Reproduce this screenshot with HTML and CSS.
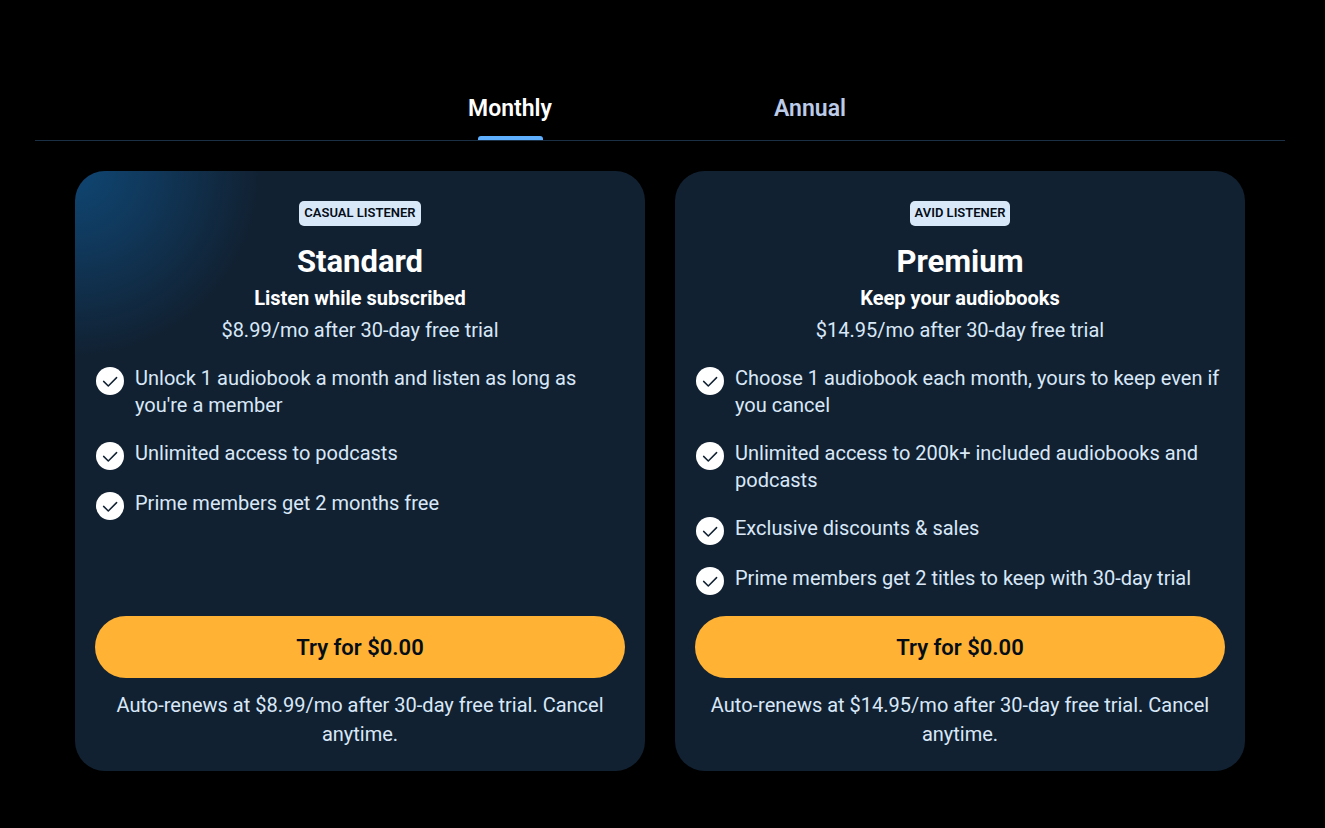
FILE: index.html
```html
<!DOCTYPE html>
<html lang="en">
<head>
    <meta charset="utf-8">
    <meta name="viewport" content="width=device-width, initial-scale=1">
    <title>Membership plans</title>
    <link rel="stylesheet" href="styles.css">
</head>
<body>
    <svg class="sprite" aria-hidden="true">
        <symbol id="check" viewBox="0 0 28 28">
            <circle cx="14" cy="14" r="14" fill="#fff"/>
            <path d="M7.6 14.4l4.7 4.6 8.3-8.4" fill="none" stroke="#112132" stroke-width="1.5" stroke-linecap="round" stroke-linejoin="round"/>
        </symbol>
    </svg>
    <main class="plans">
        <div class="tabs" role="tablist">
            <button class="tab active" role="tab" aria-selected="true">Monthly</button>
            <button class="tab" role="tab" aria-selected="false">Annual</button>
        </div>
        <div class="cards">
            <section class="card glow">
                <span class="badge">CASUAL LISTENER</span>
                <h2 class="name">Standard</h2>
                <p class="tagline">Listen while subscribed</p>
                <p class="price">$8.99/mo after 30-day free trial</p>
                <ul class="benefits">
                    <li><svg class="check"><use href="#check"/></svg>Unlock 1 audiobook a month and listen as long as you're a member</li>
                    <li><svg class="check"><use href="#check"/></svg>Unlimited access to podcasts</li>
                    <li><svg class="check"><use href="#check"/></svg>Prime members get 2 months free</li>
                </ul>
                <button class="try">Try for $0.00</button>
                <p class="terms">Auto-renews at $8.99/mo after 30-day free trial. Cancel anytime.</p>
            </section>
            <section class="card">
                <span class="badge">AVID LISTENER</span>
                <h2 class="name">Premium</h2>
                <p class="tagline">Keep your audiobooks</p>
                <p class="price">$14.95/mo after 30-day free trial</p>
                <ul class="benefits">
                    <li><svg class="check"><use href="#check"/></svg>Choose 1 audiobook each month, yours to keep even if you cancel</li>
                    <li><svg class="check"><use href="#check"/></svg>Unlimited access to 200k+ included audiobooks and podcasts</li>
                    <li><svg class="check"><use href="#check"/></svg>Exclusive discounts &amp; sales</li>
                    <li><svg class="check"><use href="#check"/></svg>Prime members get 2 titles to keep with 30-day trial</li>
                </ul>
                <button class="try">Try for $0.00</button>
                <p class="terms">Auto-renews at $14.95/mo after 30-day free trial. Cancel anytime.</p>
            </section>
        </div>
    </main>
</body>
</html>
```
FILE: styles.css
```css
* {
    box-sizing: border-box;
}
body {
    margin: 0;
    background: #000;
    color: #d9e8f8;
    font-family: Roboto, "Liberation Sans", sans-serif;
    font-size: 20px;
}
h2, p, ul {
    margin: 0;
    padding: 0;
}
button {
    border: none;
    font-family: inherit;
    font-weight: 600;
    cursor: pointer;
}
.sprite {
    display: block;
    width: 0;
    height: 0;
}
.plans {
    padding: 76px 40px 57px 35px;
}
.tabs {
    display: flex;
    justify-content: center;
    border-bottom: 1px solid #1b2f45;
}
.tab {
    display: flex;
    flex-direction: column;
    justify-content: space-between;
    align-items: center;
    width: 300px;
    height: 64px;
    padding: 17px 0 0;
    background: none;
    color: #bccbe8;
    font-size: 23px;
    line-height: 32px;
}
.tab.active {
    color: #fff;
}
.tab.active::after {
    content: "";
    width: 65px;
    height: 4px;
    border-radius: 3px 3px 0 0;
    background: #5eb0ff;
}
.cards {
    display: grid;
    grid-template-columns: 1fr 1fr;
    gap: 30px;
    padding: 30px 40px 0;
}
.card {
    display: flex;
    flex-direction: column;
    align-items: center;
    padding: 30px 20px 22px;
    border-radius: 30px;
    background: #112132;
    text-align: center;
}
.card.glow {
    background: radial-gradient(circle at 0 0, #0f426c 20px, #10385b 75px, #112132 185px);
}
.badge {
    height: 25px;
    padding: 0 5px;
    border-radius: 5px;
    background: #d9e8f8;
    color: #040d18;
    font-size: 13px;
    font-weight: 600;
    line-height: 23px;
}
.name {
    margin-top: 16px;
    color: #fff;
    font-size: 31px;
    font-weight: 700;
    line-height: 40px;
}
.tagline {
    color: #fff;
    font-weight: 700;
    line-height: 32px;
}
.price {
    line-height: 32px;
}
.benefits {
    display: flex;
    flex-direction: column;
    align-self: stretch;
    gap: 21px;
    margin: 19px 0 22px;
    list-style: none;
    line-height: 27px;
    text-align: left;
}
.benefits li {
    display: flex;
    gap: 11px;
    padding-left: 1px;
}
.check {
    flex: none;
    width: 28px;
    height: 28px;
    margin: 2px 0 -1px;
}
.try {
    align-self: stretch;
    height: 62px;
    margin-top: auto;
    border-radius: 31px;
    background: #ffb234;
    color: #040d18;
    font-size: 22px;
}
.terms {
    margin-top: 13px;
    line-height: 29px;
}
```
